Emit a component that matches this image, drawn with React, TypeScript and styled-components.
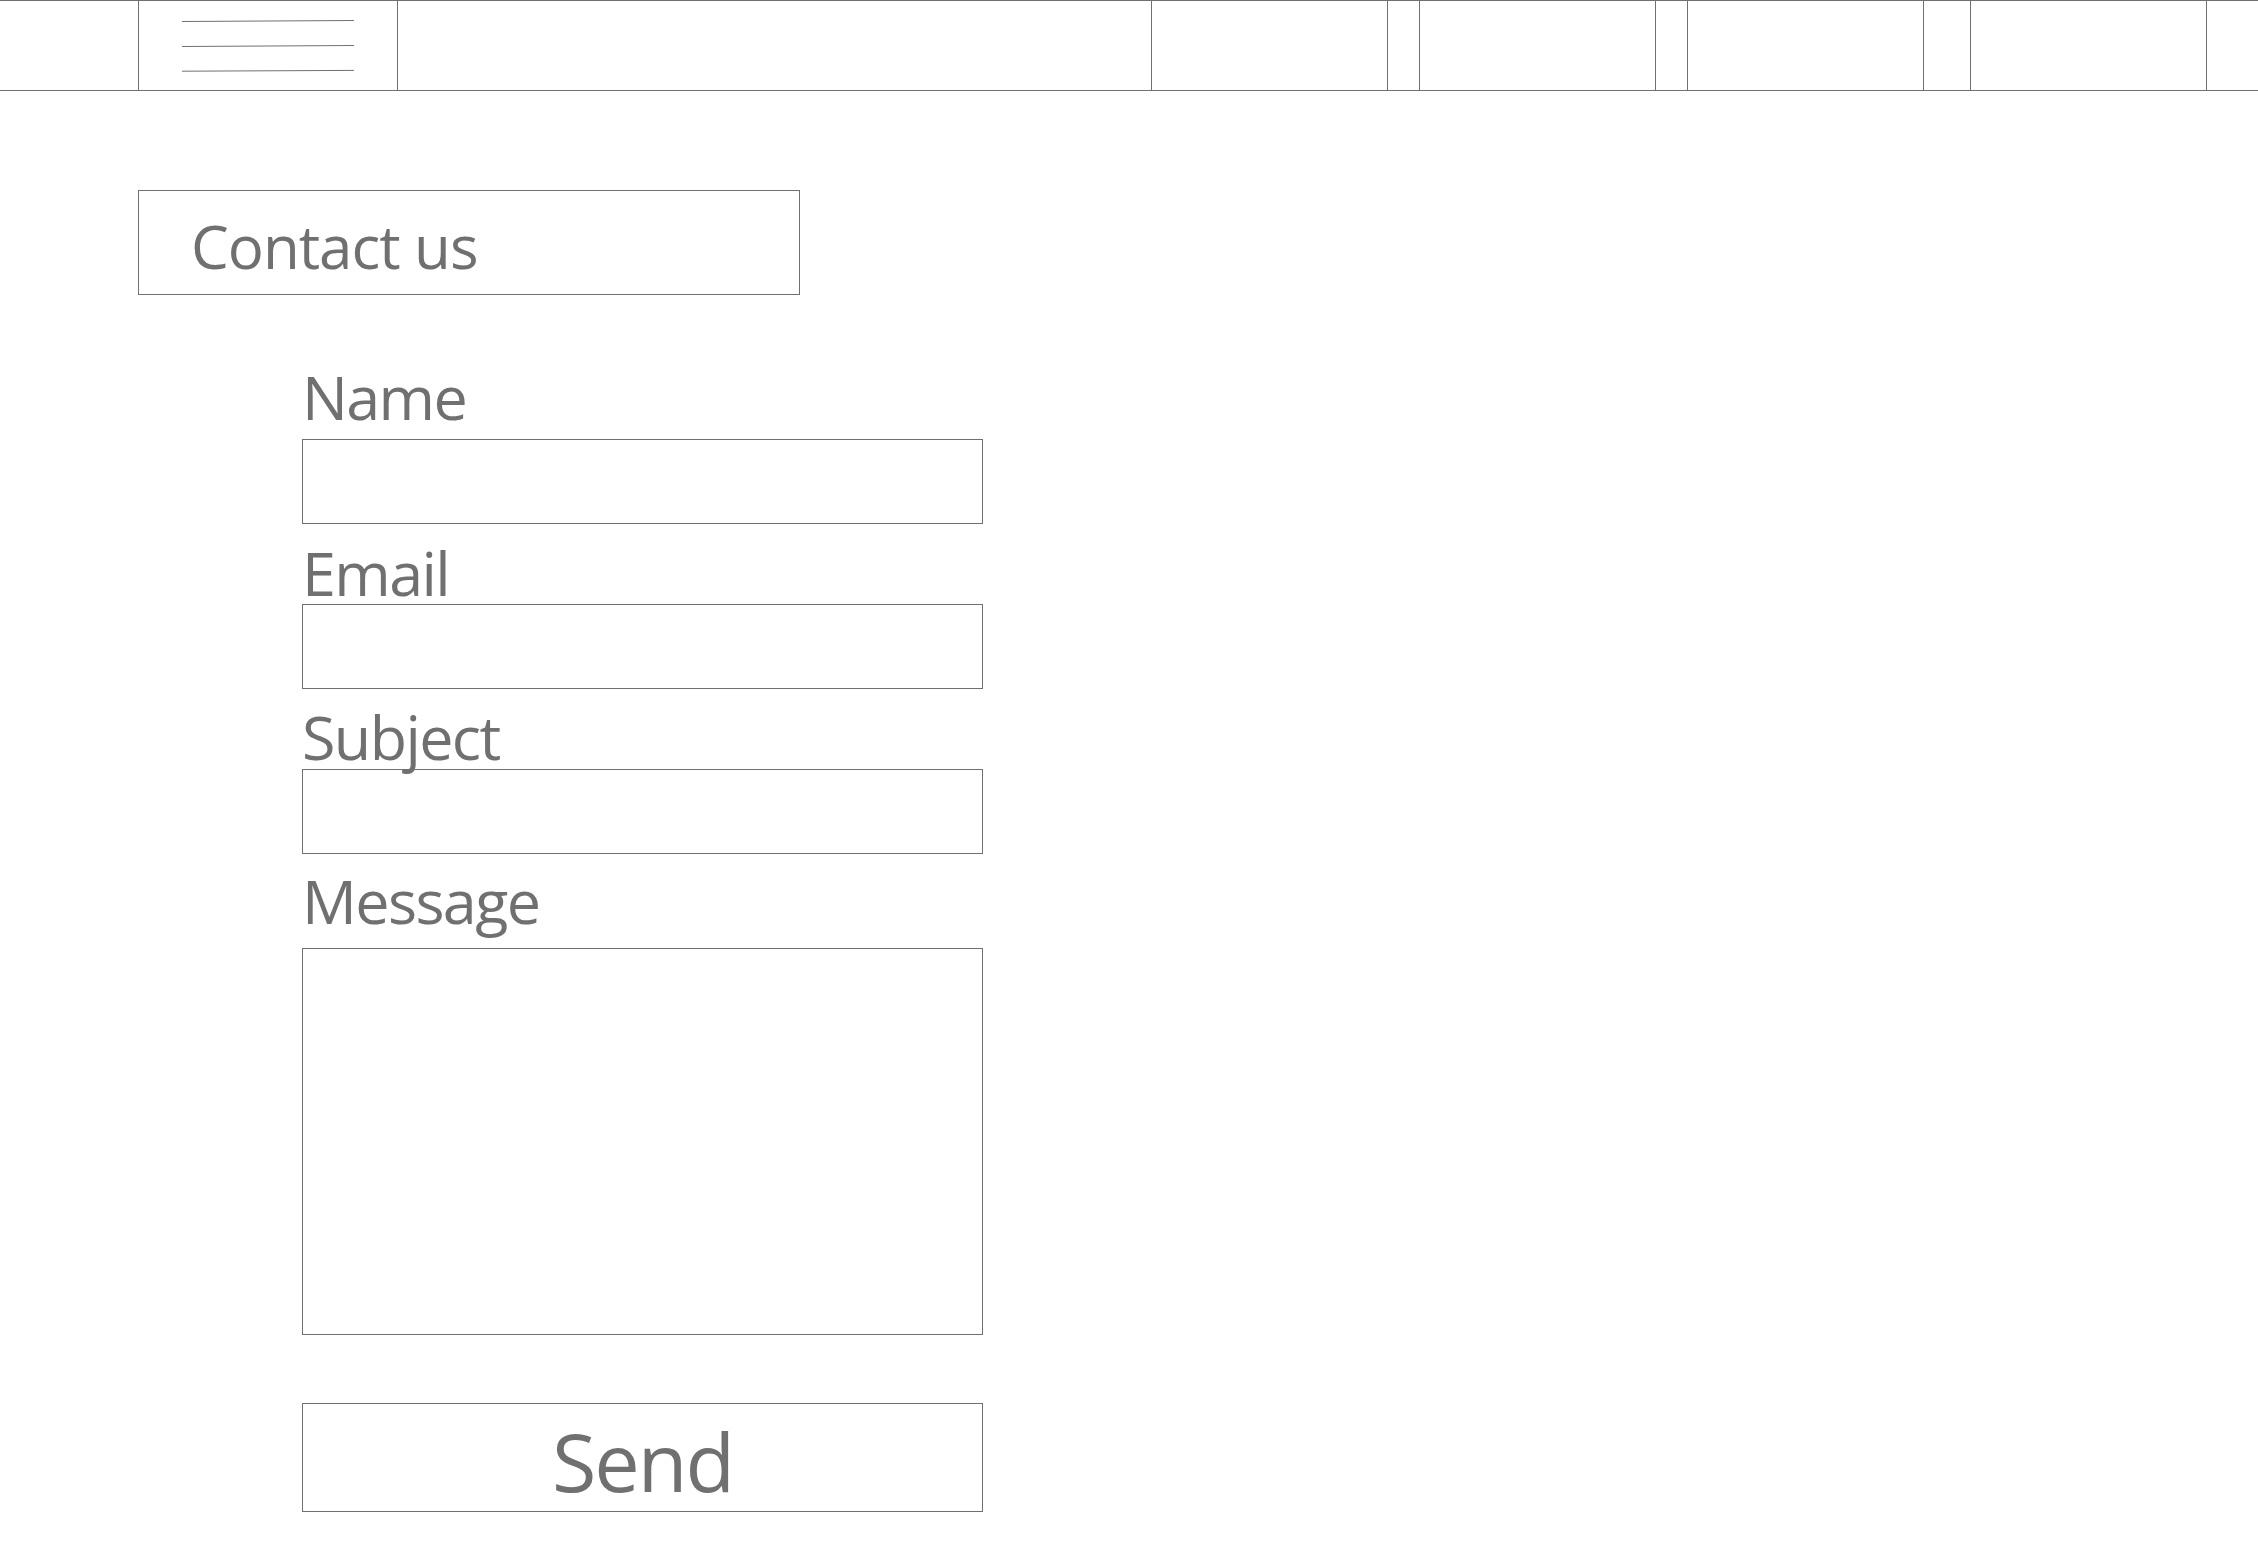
import React from 'react';
import styled, { createGlobalStyle } from 'styled-components';

const line = '#707070';

const GlobalStyle = createGlobalStyle`
  html, body {
    margin: 0;
    padding: 0;
    background: #ffffff;
  }
  body {
    font-family: 'Open Sans', 'Noto Sans', 'DejaVu Sans', sans-serif;
    color: ${line};
  }
  * {
    box-sizing: border-box;
  }
`;

// Top bar
const NavBar = styled.nav`
  display: flex;
  height: 91px;
  padding-left: 138px;
  padding-right: 51px;
  border-top: 1px solid ${line};
  border-bottom: 1px solid ${line};
`;

const MenuCell = styled.div`
  width: 260px;
  display: flex;
  justify-content: center;
  border-left: 1px solid ${line};
  border-right: 1px solid ${line};
`;

const Spacer = styled.div`
  flex: 1;
`;

const NavItem = styled.div<{ $gap?: number }>`
  width: 237px;
  margin-left: ${(p) => p.$gap ?? 0}px;
  border-left: 1px solid ${line};
  border-right: 1px solid ${line};
`;

// Content
const Main = styled.main`
  padding: 99px 0 40px 138px;
`;

const TitleBox = styled.div`
  width: 662px;
  height: 105px;
  padding: 25px 0 0 52px;
  border: 1px solid ${line};
  font-size: 60px;
  line-height: 61px;
  letter-spacing: -1px;
`;

const Form = styled.form`
  width: 681px;
  margin-left: 164px;
  display: flex;
  flex-direction: column;
`;

const Label = styled.label<{ $top: number; $gap: number }>`
  position: relative;
  z-index: 1;
  display: block;
  margin-top: ${(p) => p.$top}px;
  margin-bottom: ${(p) => p.$gap}px;
  font-size: 61px;
  line-height: 61px;
  height: 61px;
  letter-spacing: -1.6px;
`;

const TextInput = styled.input`
  display: block;
  width: 100%;
  height: 85px;
  margin: 0;
  padding: 0 16px;
  border: 1px solid ${line};
  border-radius: 0;
  background: transparent;
  font: inherit;
  font-size: 32px;
  color: ${line};
  outline: none;
`;

const MessageInput = styled.textarea`
  display: block;
  width: 100%;
  height: 387px;
  margin: 0;
  padding: 16px;
  border: 1px solid ${line};
  border-radius: 0;
  background: transparent;
  font: inherit;
  font-size: 32px;
  color: ${line};
  resize: none;
  outline: none;
`;

const SendButton = styled.button`
  display: block;
  width: 100%;
  height: 109px;
  margin: 68px 0 0;
  padding: 6px 0 0;
  border: 1px solid ${line};
  border-radius: 0;
  background: #ffffff;
  font-family: inherit;
  font-size: 81px;
  line-height: 81px;
  letter-spacing: -2px;
  color: ${line};
  text-align: center;
  vertical-align: top;
  cursor: pointer;
  & > span {
    display: block;
  }
`;

const MenuIcon: React.FC = () => (
  <svg width="172" height="89" viewBox="0 0 172 89" aria-hidden="true">
    <g stroke={line} strokeWidth="1">
      <line x1="0" y1="20.5" x2="172" y2="19.5" />
      <line x1="0" y1="45.5" x2="172" y2="44.5" />
      <line x1="0" y1="70.2" x2="172" y2="69.4" />
    </g>
  </svg>
);

const fields = [
  { id: 'name', label: 'Name', top: 71, gap: 12 },
  { id: 'email', label: 'Email', top: 18, gap: 1 },
  { id: 'subject', label: 'Subject', top: 17, gap: 2 },
];

const App: React.FC = () => {
  return (
    <>
      <GlobalStyle />
      <NavBar>
        <MenuCell>
          <MenuIcon />
        </MenuCell>
        <Spacer />
        <NavItem />
        <NavItem $gap={31} />
        <NavItem $gap={31} />
        <NavItem $gap={46} />
      </NavBar>
      <Main>
        <TitleBox>Contact us</TitleBox>
        <Form onSubmit={(e) => e.preventDefault()}>
          {fields.map((f) => (
            <React.Fragment key={f.id}>
              <Label htmlFor={f.id} $top={f.top} $gap={f.gap}>
                {f.label}
              </Label>
              <TextInput id={f.id} type={f.id === 'email' ? 'email' : 'text'} />
            </React.Fragment>
          ))}
          <Label htmlFor="message" $top={16} $gap={17}>
            Message
          </Label>
          <MessageInput id="message" />
          <SendButton type="submit">
            <span>Send</span>
          </SendButton>
        </Form>
      </Main>
    </>
  );
};

export default App;
